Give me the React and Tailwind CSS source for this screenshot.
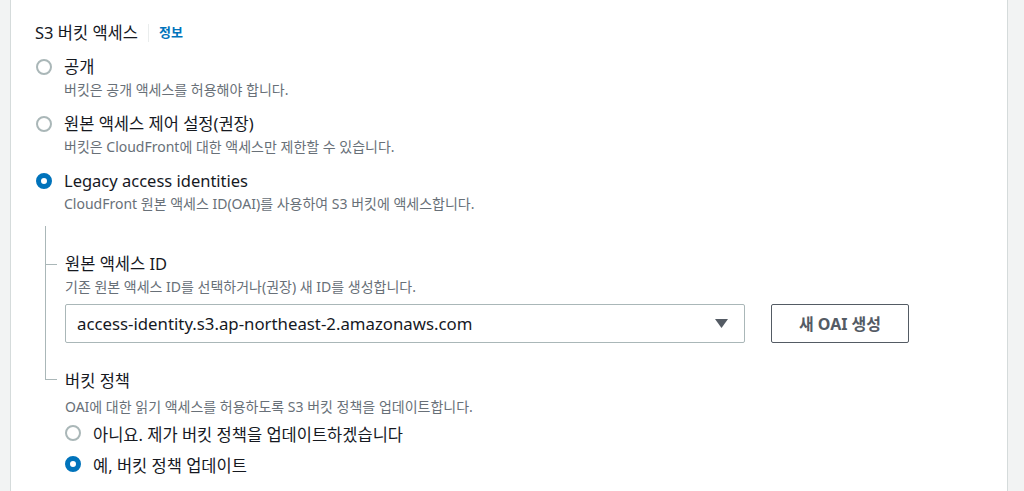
const font = { fontFamily: '"Noto Sans", "Noto Sans CJK KR", sans-serif' }

function Radio({ checked }) {
  return checked ? (
    <span className="box-border inline-block size-4 shrink-0 rounded-full border-[5px] border-[#0073bb] bg-white" />
  ) : (
    <span className="box-border inline-block size-4 shrink-0 rounded-full border-2 border-[#aab7b8] bg-white" />
  )
}

function Option({ checked, label, desc, labelCls = 'text-[16.5px]' }) {
  return (
    <div className="flex flex-col">
      <div className="flex h-[22px] items-center">
        <div className="flex w-[29px] items-center pl-px">
          <Radio checked={checked} />
        </div>
        <span className={`${labelCls} leading-[22px] text-[#16191f]`}>{label}</span>
      </div>
      {desc && (
        <div className="mt-[1px] pl-[29px] text-[14px] leading-[21px] text-[#687078]">{desc}</div>
      )}
    </div>
  )
}

export default function App() {
  return (
    <div style={font} className="flex h-[491px] overflow-hidden bg-[#f2f3f3] pl-[10px] pr-[16px]">
      <div className="flex-1 border-x border-[#d5dbdb] bg-white pl-[24px] pt-[22px]">
        <div className="flex h-[22px] items-center">
          <span className="text-[16.5px] leading-[22px] text-[#16191f]">S3 버킷 액세스</span>
          <span className="mx-[10px] h-[18px] w-px bg-[#eaeded]" />
          <span className="text-[13px] font-bold text-[#0073bb]">정보</span>
        </div>

        <div className="mt-[12px] flex flex-col gap-[13px]">
          <Option label="공개" desc="버킷은 공개 액세스를 허용해야 합니다." />
          <Option label="원본 액세스 제어 설정(권장)" desc="버킷은 CloudFront에 대한 액세스만 제한할 수 있습니다." />
          <Option checked label="Legacy access identities" labelCls="text-[16.5px]"
            desc="CloudFront 원본 액세스 ID(OAI)를 사용하여 S3 버킷에 액세스합니다." />
        </div>

        <div className="ml-[10px] mt-[12px] flex">
          <div className="flex flex-col">
            <div className="h-[154px] w-[12px] border-b border-l border-[#aab7b8]" />
          </div>
          <div className="flex flex-col pl-[8px] pt-[27px]">
            <div className="relative text-[16.5px] leading-[22px] text-[#16191f]">
              <span className="absolute left-[-20px] top-[11px] h-px w-[12px] bg-[#aab7b8]" />
              원본 액세스 ID
            </div>
            <div className="mt-[1px] text-[14px] leading-[21px] text-[#687078]">기존 원본 액세스 ID를 선택하거나(권장) 새 ID를 생성합니다.</div>
            <div className="mt-[7px] flex items-center gap-[26px]">
              <div className="flex h-[39px] w-[680px] items-center justify-between rounded-[2px] border border-[#aab7b8] pl-[11px] pr-[16px]">
                <span className="text-[16.8px] text-[#16191f]">access-identity.s3.ap-northeast-2.amazonaws.com</span>
                <svg width="13" height="9" viewBox="0 0 13 9"><path d="M0 0h13L6.5 9z" fill="#545b64" /></svg>
              </div>
              <button className="flex h-[39px] w-[138px] items-center justify-center rounded-[2px] border border-[#545b64] text-[16px] font-bold text-[#545b64]">
                새 OAI 생성
              </button>
            </div>

            <div className="mt-[27px] text-[16.5px] leading-[22px] text-[#16191f]">버킷 정책</div>
            <div className="mt-[4px] text-[14px] leading-[21px] text-[#687078]">OAI에 대한 읽기 액세스를 허용하도록 S3 버킷 정책을 업데이트합니다.</div>
            <div className="mt-[7px] flex flex-col gap-[9px]">
              <div className="flex h-[22px] items-center">
                <div className="w-[28px]"><Radio /></div>
                <span className="text-[16.5px] text-[#16191f]">아니요. 제가 버킷 정책을 업데이트하겠습니다</span>
              </div>
              <div className="flex h-[22px] items-center">
                <div className="w-[28px]"><Radio checked /></div>
                <span className="text-[16.5px] text-[#16191f]">예, 버킷 정책 업데이트</span>
              </div>
            </div>
          </div>
        </div>
      </div>
    </div>
  )
}
